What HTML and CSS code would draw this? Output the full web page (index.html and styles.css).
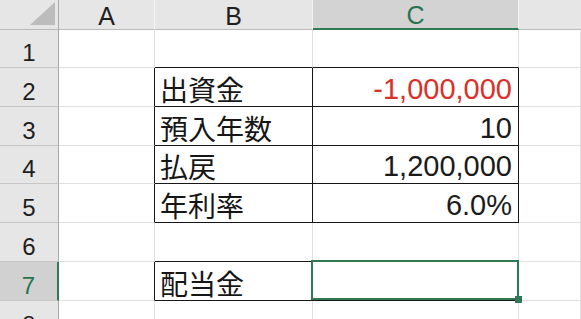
FILE: index.html
```html
<!DOCTYPE html>
<html lang="ja">
<head>
<meta charset="utf-8">
<title>Sheet</title>
<link rel="stylesheet" href="styles.css">
</head>
<body>
<div class="sheet">
  <div class="corner"><svg class="tri" width="58" height="29" viewBox="0 0 58 29"><polygon points="55,2 55,25 30,25" fill="#bcbcbc"/></svg></div>
  <div class="ch">A</div>
  <div class="ch">B</div>
  <div class="ch sel-col">C</div>
  <div class="ch last"></div>

  <div class="rh">1</div>
  <div class="c"></div>
  <div class="c tb-b"></div>
  <div class="c tb-b"></div>
  <div class="c"></div>

  <div class="rh">2</div>
  <div class="c tb-r"></div>
  <div class="c tb jp">出資金</div>
  <div class="c tb num red">-1,000,000</div>
  <div class="c"></div>

  <div class="rh">3</div>
  <div class="c tb-r"></div>
  <div class="c tb jp">預入年数</div>
  <div class="c tb num">10</div>
  <div class="c"></div>

  <div class="rh">4</div>
  <div class="c tb-r"></div>
  <div class="c tb jp">払戻</div>
  <div class="c tb num">1,200,000</div>
  <div class="c"></div>

  <div class="rh">5</div>
  <div class="c tb-r"></div>
  <div class="c tb jp">年利率</div>
  <div class="c tb num">6.0%</div>
  <div class="c"></div>

  <div class="rh">6</div>
  <div class="c"></div>
  <div class="c tb-b"></div>
  <div class="c tb-b"></div>
  <div class="c"></div>

  <div class="rh sel-row">7</div>
  <div class="c tb-r"></div>
  <div class="c tb jp">配当金</div>
  <div class="c tb active"><span class="handle"></span></div>
  <div class="c"></div>

  <div class="rh">8</div>
  <div class="c"></div>
  <div class="c"></div>
  <div class="c"></div>
  <div class="c"></div>
</div>
</body>
</html>
```
FILE: styles.css
```css
html, body {
  margin: 0;
  padding: 0;
  background: #ffffff;
  overflow: hidden;
}

.sheet {
  display: grid;
  grid-template-columns: 59px 96px 158px 206px 62px;
  grid-template-rows: 30px 38px 39px 39px 38px 39px 39px 39px 39px;
  width: 581px;
  height: 319px;
  overflow: hidden;
  font-family: "Liberation Sans", Arial, sans-serif;
  color: #1b1b1b;
}

.sheet > div {
  box-sizing: border-box;
  min-width: 0;
}

.corner {
  background: #e6e6e6;
  border-right: 1px solid #a9a9a9;
  border-bottom: 1px solid #b9b9b9;
  position: relative;
}

.tri {
  display: block;
}

.ch {
  background: #e6e6e6;
  border-right: 1px solid #f3f3f3;
  border-bottom: 1px solid #b9b9b9;
  font-size: 25px;
  line-height: 25px;
  display: flex;
  align-items: flex-end;
  justify-content: center;
  padding-bottom: 0;
  color: #1e1e1e;
}

.ch.last {
  border-right: none;
}

.ch.sel-col {
  background: #d3d3d3;
  color: #2a7350;
  border-bottom: 2px solid #2f7a55;
}

.rh {
  background: #e6e6e6;
  border-right: 1px solid #a9a9a9;
  border-bottom: 1px solid #c6c6c6;
  font-size: 24px;
  line-height: 24px;
  display: flex;
  align-items: flex-end;
  justify-content: center;
  padding-bottom: 2px;
  color: #1e1e1e;
}

.rh.sel-row {
  background: #d1d1d1;
  color: #2a7350;
  border-right: 2px solid #2f7a55;
}

.c {
  border-right: 1px solid #e0e0e0;
  border-bottom: 1px solid #e0e0e0;
  font-size: 28px;
  line-height: 28px;
  display: flex;
  align-items: flex-end;
  padding: 0 6px 3px 6px;
  white-space: nowrap;
}

.c.tb {
  border-right-color: #161616;
  border-bottom-color: #161616;
}

.c.tb-r {
  border-right-color: #161616;
}

.c.tb-b {
  border-bottom-color: #161616;
}

.jp {
  font-family: "Noto Sans CJK JP", "Liberation Sans", sans-serif;
  padding-left: 5px;
  color: #161616;
}

.num {
  justify-content: flex-end;
  font-size: 29px;
  color: #1b1b1b;
}

.red {
  color: #d93127;
}

.active {
  position: relative;
}

.active::after {
  content: "";
  position: absolute;
  top: -2px;
  left: -2px;
  right: -1px;
  bottom: 0;
  border: 2px solid #2f7a55;
  z-index: 2;
}

.handle {
  position: absolute;
  right: -4px;
  bottom: -3px;
  width: 7px;
  height: 7px;
  background: #2f7a55;
  z-index: 3;
}
```
